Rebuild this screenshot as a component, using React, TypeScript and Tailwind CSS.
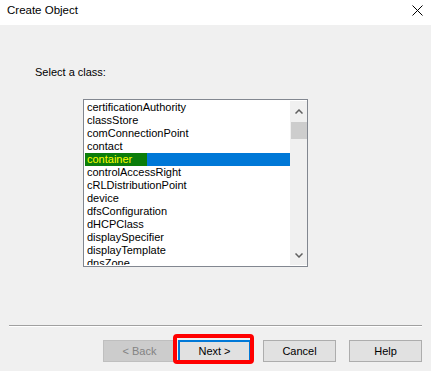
const classes = [
  "certificationAuthority",
  "classStore",
  "comConnectionPoint",
  "contact",
  "container",
  "controlAccessRight",
  "cRLDistributionPoint",
  "device",
  "dfsConfiguration",
  "dHCPClass",
  "displaySpecifier",
  "displayTemplate",
  "dnsZone",
];

const Chevron = ({ up }: { up?: boolean }) => (
  <svg width="8" height="5" viewBox="0 0 8 5" className="block">
    <path
      d={up ? "M0.5 4.5 L4 1 L7.5 4.5" : "M0.5 0.5 L4 4 L7.5 0.5"}
      fill="none"
      stroke="#606060"
      strokeWidth="1.5"
    />
  </svg>
);

const App = () => {
  return (
    <div className="w-[431px] h-[371px] bg-[#f0f0f0] flex flex-col font-['Liberation_Sans',Arial,sans-serif] text-black overflow-hidden">
      <header className="h-[25px] bg-white flex items-start justify-between pl-[7px] pr-[8px] pt-[1px]">
        <span className="text-[11.5px] leading-[16px] pt-[1px]">Create Object</span>
        <svg width="11" height="11" viewBox="0 0 11 11" className="mt-[4px]">
          <path d="M0.5 0.5 L10.5 10.5 M10.5 0.5 L0.5 10.5" stroke="#000" strokeWidth="1" />
        </svg>
      </header>

      <main className="flex-1 flex flex-col">
        <p className="mt-[41px] ml-[35px] text-[11px] leading-[13px]">Select a class:</p>

        <div className="mt-[20px] ml-[83px] w-[225px] h-[168px] border border-[#828790] bg-white flex py-[1px] pl-[1px]">
          <ul className="flex-1 overflow-hidden text-[11px] leading-[13px]">
            {classes.map((c) =>
              c === "container" ? (
                <li key={c} className="h-[13px] bg-[#0078d7]">
                  <span className="inline-block w-[62px] h-[13px] bg-[#0b7d0b] pl-[2px] text-[#ffff00]">{c}</span>
                </li>
              ) : (
                <li key={c} className="h-[13px] pl-[2px] whitespace-nowrap">
                  {c}
                </li>
              )
            )}
          </ul>
          <div className="w-[17px] bg-[#f0f0f0] flex flex-col items-center">
            <div className="h-[19px] flex items-center justify-center pt-[1px]">
              <Chevron up />
            </div>
            <div className="mt-[2px] w-[16px] h-[17px] bg-[#cdcdcd]" />
            <div className="flex-1" />
            <div className="h-[17px] flex items-start justify-center pt-[5px]">
              <Chevron />
            </div>
          </div>
        </div>

        <div className="mt-[58px] ml-[9px] w-[413px] h-[2px] border-t border-[#a0a0a0] border-b border-b-white" />

        <div className="mt-[13px] flex text-[11px] leading-[20px]">
          <button className="ml-[103px] w-[73px] h-[22px] bg-[#cccccc] border border-[#bfbfbf] text-[#838383]">
            &lt; Back
          </button>
          <div className="relative ml-[2px]">
            <button className="w-[73px] h-[22px] bg-[#e1e1e1] border-2 border-[#0078d7] leading-[18px]">
              Next &gt;
            </button>
            <div className="absolute left-[-5px] top-[-6px] w-[81px] h-[30px] border-4 border-[#ff0000] rounded-[4px] pointer-events-none" />
          </div>
          <button className="ml-[12px] w-[73px] h-[22px] bg-[#e1e1e1] border border-[#adadad]">Cancel</button>
          <button className="ml-[13px] w-[73px] h-[22px] bg-[#e1e1e1] border border-[#adadad]">Help</button>
        </div>
      </main>
    </div>
  );
};

export default App;
